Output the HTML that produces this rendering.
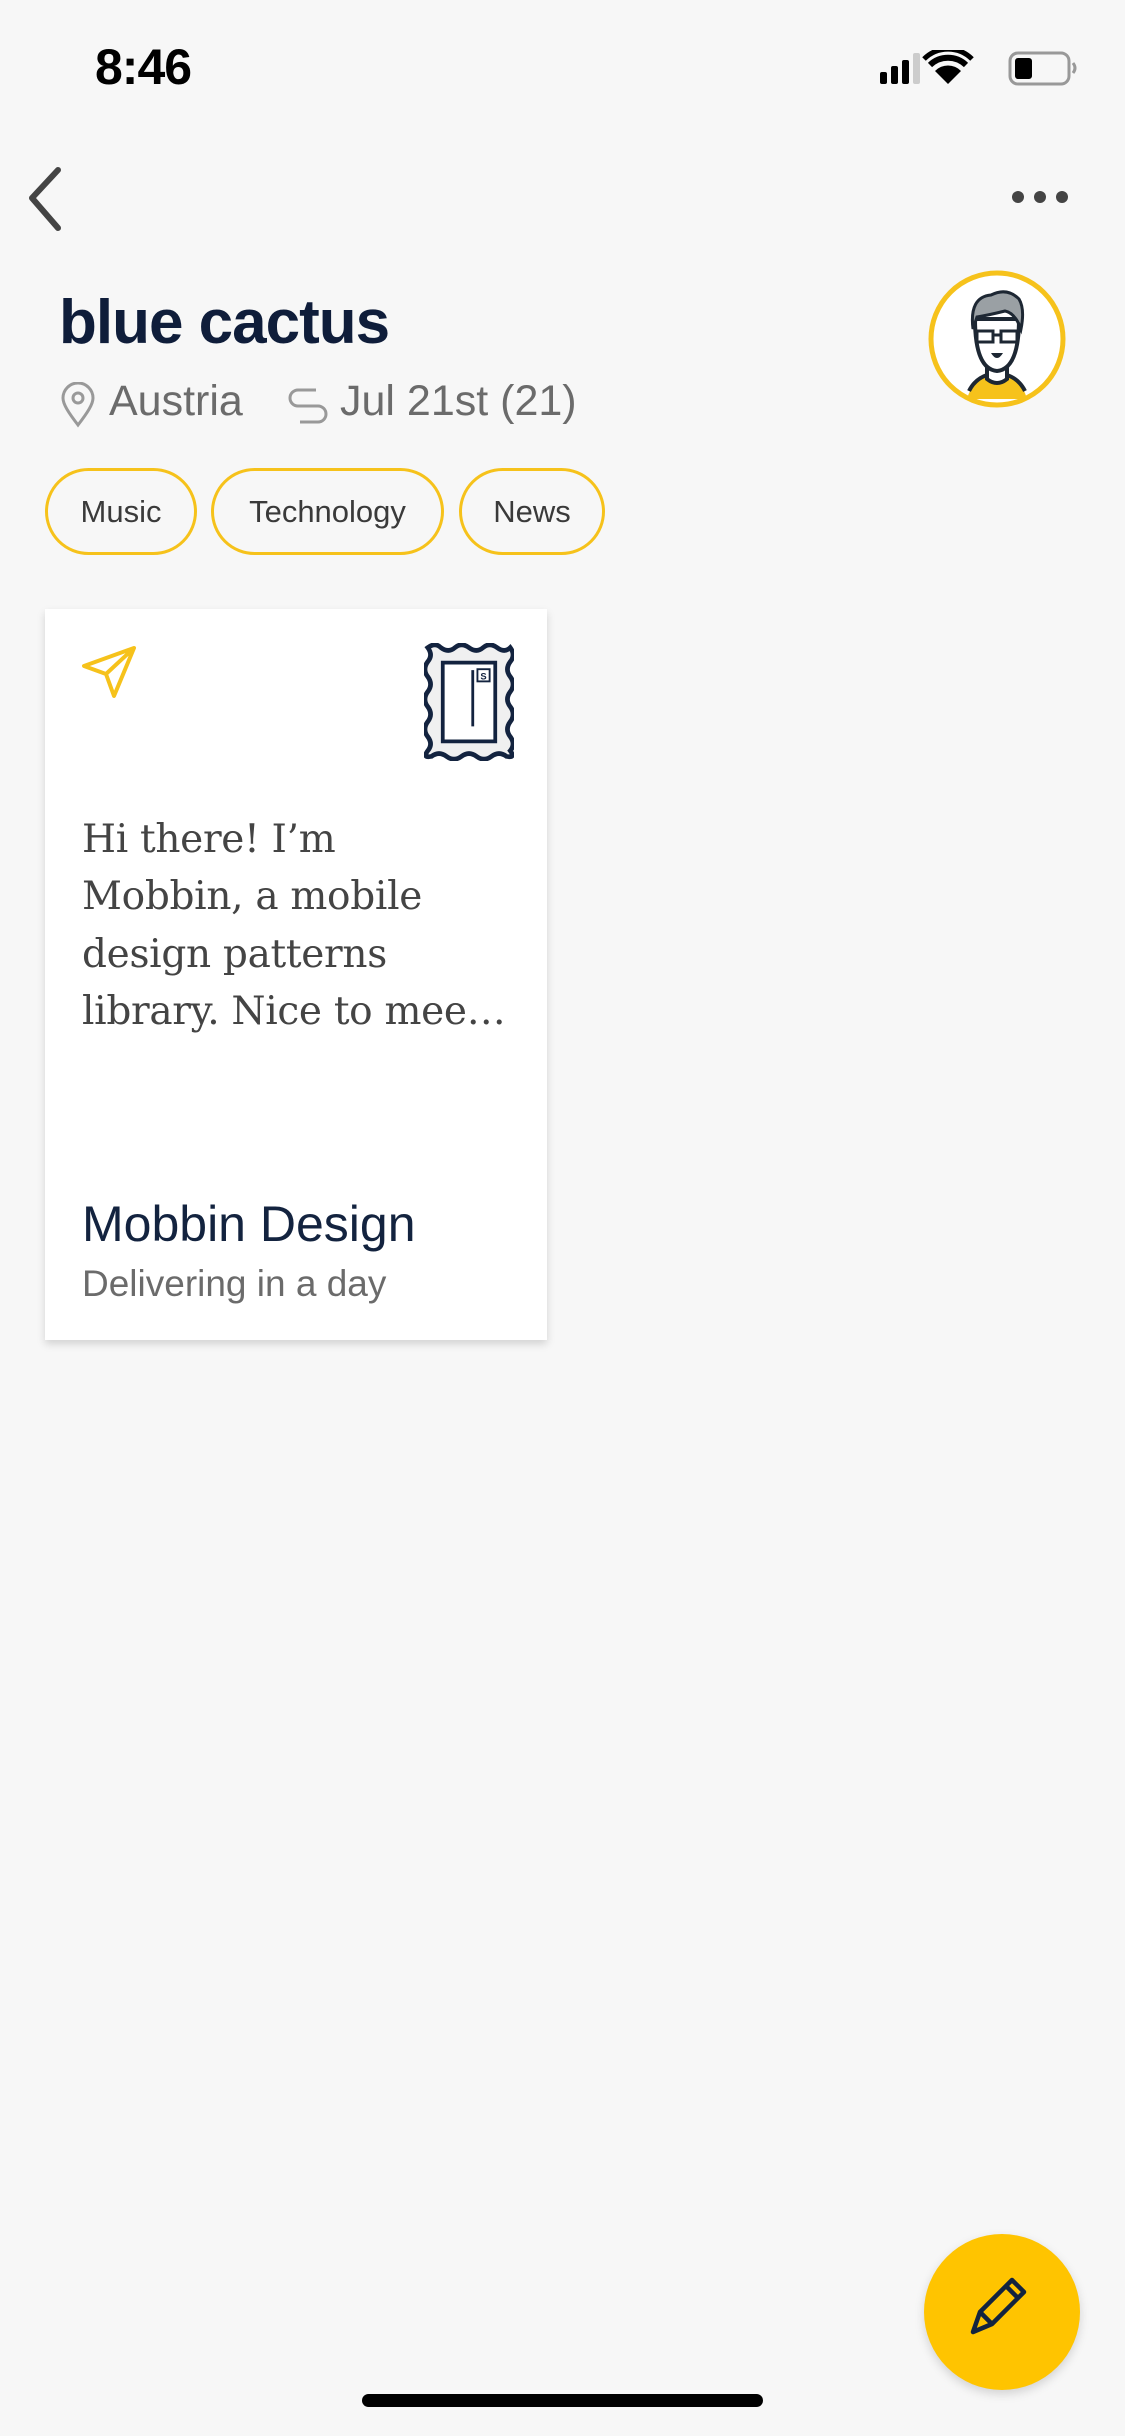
<!DOCTYPE html>
<html><head><meta charset="utf-8"><style>
html,body{margin:0;padding:0;}
body{width:1125px;height:2436px;background:#f7f7f7;position:relative;overflow:hidden;font-family:"Liberation Sans",sans-serif;}
.abs{position:absolute;}
.chip{position:absolute;top:468px;height:81px;border:3px solid #f6c21b;border-radius:45px;font-size:31px;color:#3a3a3a;line-height:81px;text-align:center;}
.body{position:absolute;left:82px;font-family:"DejaVu Serif","Liberation Serif",serif;font-size:39px;color:#444;line-height:57.5px;letter-spacing:-0.3px;}
</style></head><body>
<div class="abs" style="left:95px;top:38px;font-size:50px;font-weight:bold;color:#000;letter-spacing:-1px;">8:46</div>
<svg class="abs" style="left:878px;top:50px" width="210" height="40" viewBox="0 0 210 40">
<rect x="2" y="22" width="7" height="12" rx="2" fill="#000"/>
<rect x="13" y="16" width="7" height="18" rx="2" fill="#000"/>
<rect x="24" y="10" width="7" height="24" rx="2" fill="#000"/>
<rect x="35" y="3" width="7" height="31" rx="2" fill="#ccc"/>
<path d="M70 34 L57 21 A18 18 0 0 1 83 21 Z" fill="#000"/>
<path d="M52 15 A26 26 0 0 1 88 15" stroke="#000" stroke-width="6" fill="none"/>
<path d="M46 9 A34 34 0 0 1 94 9" stroke="#000" stroke-width="5" fill="none"/>
<rect x="132" y="3" width="59" height="31" rx="8" fill="none" stroke="#999" stroke-width="3"/>
<rect x="137" y="8" width="17" height="21" rx="3" fill="#000"/>
<path d="M195 13 q4 5 0 10" stroke="#999" stroke-width="3" fill="none"/>
</svg>
<svg class="abs" style="left:20px;top:160px" width="60" height="80"><path d="M38 10 L12 38 L38 68" stroke="#444" stroke-width="6" fill="none" stroke-linecap="round" stroke-linejoin="round"/></svg>
<svg class="abs" style="left:1005px;top:185px" width="70" height="24"><circle cx="13" cy="12" r="6" fill="#444"/><circle cx="35" cy="12" r="6" fill="#444"/><circle cx="57" cy="12" r="6" fill="#444"/></svg>
<div class="abs" style="left:59px;top:287px;font-size:62px;font-weight:bold;color:#0f1d3a;letter-spacing:-1px;">blue cactus</div>
<svg class="abs" style="left:60px;top:382px" width="36" height="46" viewBox="0 0 36 46"><path d="M18 43 C8 30 3 22 3 16 A15 15 0 0 1 33 16 C33 22 28 30 18 43 Z" fill="none" stroke="#999" stroke-width="3"/><circle cx="18" cy="16" r="5" fill="none" stroke="#999" stroke-width="3"/></svg>
<div class="abs" style="left:109px;top:377px;font-size:43px;color:#6b6b6b;">Austria</div>
<svg class="abs" style="left:288px;top:386px" width="40" height="40" viewBox="0 0 40 40"><path d="M28 4 H10 A8 8 0 0 0 10 20 H30 A8 8 0 0 1 30 36 H12" fill="none" stroke="#999" stroke-width="3"/></svg>
<div class="abs" style="left:340px;top:377px;font-size:43px;color:#6b6b6b;">Jul 21st (21)</div>
<svg class="abs" style="left:927px;top:269px" width="140" height="140" viewBox="0 0 140 140">
<circle cx="70" cy="70" r="66" fill="#fff" stroke="#f6c21b" stroke-width="5"/>
<path d="M40 130 Q45 112 60 108 L80 108 Q95 112 100 130" fill="#f6c21b"/>
<path d="M42 122 Q48 110 60 106 L80 106 Q92 110 98 122" fill="none" stroke="#1d2733" stroke-width="4"/>
<path d="M60 95 V110 Q70 118 80 110 V95" fill="#fff" stroke="#1d2733" stroke-width="4"/>
<path d="M48 50 Q48 100 70 102 Q92 100 92 50 Z" fill="#fff" stroke="#1d2733" stroke-width="4"/>
<path d="M46 60 Q42 28 64 26 Q80 18 92 30 Q98 40 94 60 Q88 44 78 42 Q62 46 50 48 Z" fill="#9aa0a4" stroke="#1d2733" stroke-width="3"/>
<rect x="50" y="62" width="16" height="11" fill="none" stroke="#1d2733" stroke-width="3"/>
<rect x="74" y="62" width="16" height="11" fill="none" stroke="#1d2733" stroke-width="3"/>
<path d="M66 66 H74" stroke="#1d2733" stroke-width="3"/>
<path d="M64 84 H76 Q70 94 64 84 Z" fill="#1d2733"/>
</svg>
<div class="chip" style="left:45px;width:146px;">Music</div>
<div class="chip" style="left:211px;width:227px;">Technology</div>
<div class="chip" style="left:459px;width:140px;">News</div>
<div class="abs" style="left:45px;top:609px;width:502px;height:731px;background:#fff;box-shadow:0 4px 8px rgba(0,0,0,0.15);"></div>
<svg class="abs" style="left:80px;top:644px" width="58" height="58" viewBox="0 0 58 58"><path d="M54 4 L4 22 L26 30 L34 52 Z M54 4 L26 30" fill="none" stroke="#f6c21b" stroke-width="4" stroke-linejoin="round"/></svg>
<svg class="abs" style="left:424px;top:643px" width="90" height="118" viewBox="0 0 96 124">
<path d="M4 4 Q12 -2 18 4 Q26 10 33 4 Q40 -2 48 4 Q56 10 63 4 Q70 -2 78 4 Q86 10 92 4 Q98 12 92 19 Q86 27 92 35 Q98 43 92 51 Q86 59 92 67 Q98 75 92 83 Q86 91 92 99 Q98 107 92 114 Q98 122 88 120 Q80 114 72 120 Q64 126 56 120 Q48 114 40 120 Q32 126 24 120 Q16 114 8 120 Q-2 122 4 114 Q10 107 4 99 Q-2 91 4 83 Q10 75 4 67 Q-2 59 4 51 Q10 43 4 35 Q-2 27 4 19 Q10 12 4 4 Z" fill="#f0f0f0" stroke="#13233f" stroke-width="5"/>
<rect x="20" y="20" width="56" height="84" fill="#fff" stroke="#13233f" stroke-width="4"/>
<path d="M52 28 V88" stroke="#13233f" stroke-width="3"/>
<rect x="57" y="27" width="13" height="13" fill="#fff" stroke="#13233f" stroke-width="2"/>
<text x="63.5" y="38" font-size="10" font-family="Liberation Sans" font-weight="bold" text-anchor="middle" fill="#13233f">S</text>
</svg>
<div class="body" style="top:811px;">Hi there! I’m</div>
<div class="body" style="top:868px;">Mobbin, a mobile</div>
<div class="body" style="top:926px;">design patterns</div>
<div class="body" style="top:983px;">library. Nice to mee…</div>
<div class="abs" style="left:82px;top:1195px;font-size:50px;color:#13233f;">Mobbin Design</div>
<div class="abs" style="left:82px;top:1263px;font-size:37px;color:#6b6b6b;">Delivering in a day</div>
<div class="abs" style="left:924px;top:2234px;width:156px;height:156px;border-radius:50%;background:#ffc400;box-shadow:0 4px 10px rgba(0,0,0,0.15);"></div>
<svg class="abs" style="left:962px;top:2272px" width="80" height="80" viewBox="0 0 80 80"><path d="M11 60 L18 40 L50 8 L62 20 L30 52 Z M18 40 L30 52 M44 14 L56 26" fill="none" stroke="#13233f" stroke-width="4.5" stroke-linejoin="round"/></svg>
<div class="abs" style="left:362px;top:2394px;width:401px;height:13px;border-radius:7px;background:#000;"></div>
</body></html>
